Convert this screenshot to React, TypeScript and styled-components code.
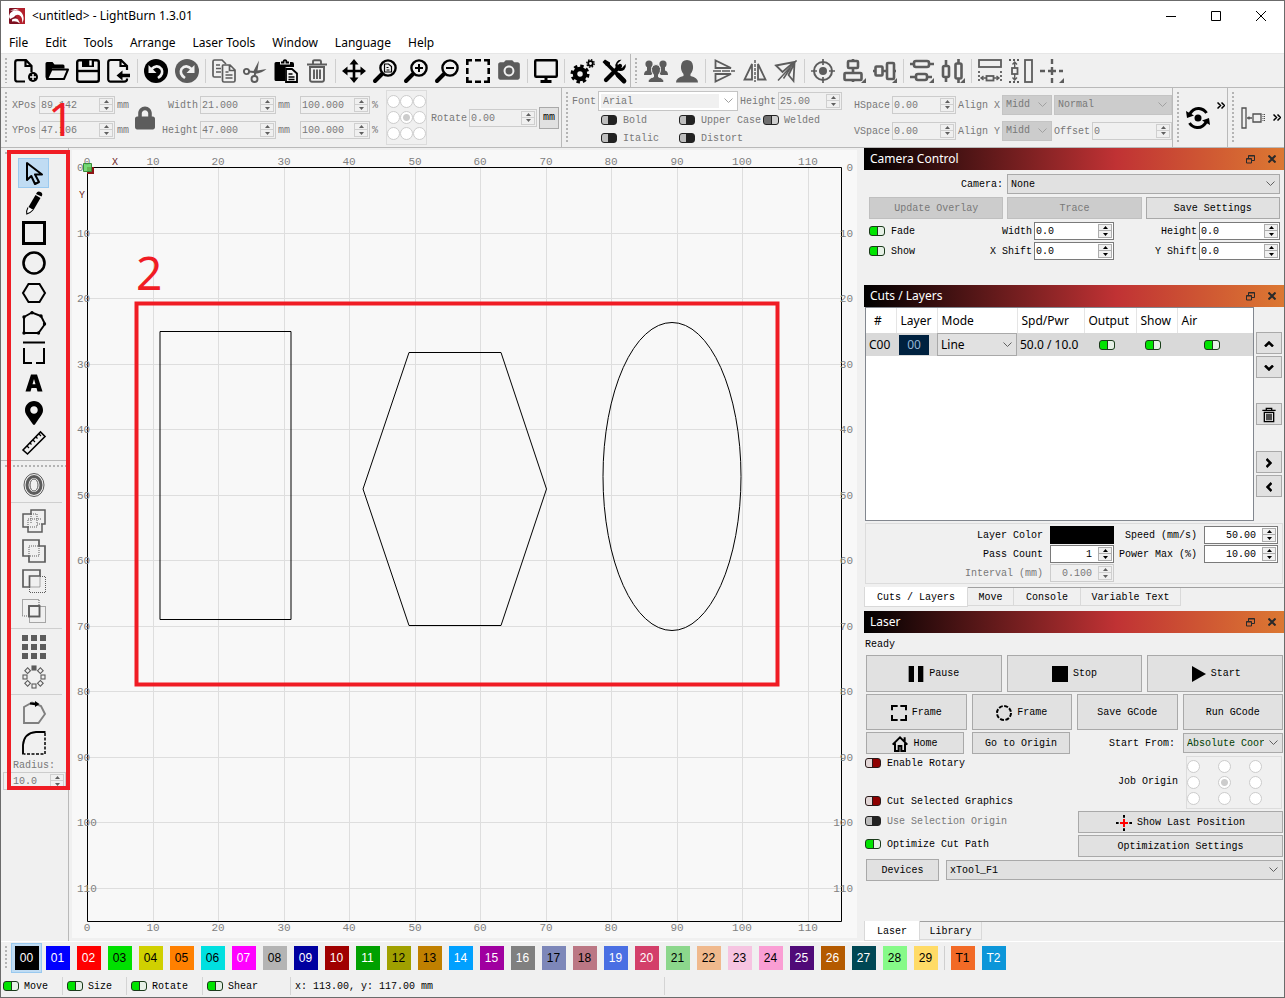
import React from "react";
import styled, { createGlobalStyle, css } from "styled-components";
import { FaLock, FaMapMarkerAlt } from "react-icons/fa";
import { MdCameraAlt } from "react-icons/md";

const mono = `"Liberation Mono", "Noto Sans CJK SC", monospace`;
const ui = `"Noto Sans", "Noto Sans CJK SC", sans-serif`;
const gray = "#5c5c5c";
const line = "#a9a9a9";

const Global = createGlobalStyle`
  *, *::before, *::after { box-sizing: border-box; }
  body { margin: 0; background: #f0f0f0; }
  button, input, select { font: inherit; color: inherit; margin: 0; padding: 0; }
`;

const Window = styled.div`
  min-height: 100vh;
  display: flex;
  flex-direction: column;
  border: 1px solid #6b6b6b;
  background: #f0f0f0;
  font: 10px/12px ${mono};
  color: #000;
  white-space: pre;
`;

/* ---------- shared pieces ---------- */

const Svg = styled.svg<{ $s?: number }>`
  display: block;
  flex: none;
  width: ${(p) => p.$s ?? 24}px;
  height: ${(p) => p.$s ?? 24}px;
  overflow: visible;
`;

const Grip = styled.span<{ $flat?: boolean }>`
  flex: none;
  align-self: stretch;
  ${(p) =>
    p.$flat
      ? css`
          height: 2px;
          margin: 0 0 0 4px;
          background: repeating-linear-gradient(90deg, #b4b4b4 0 2px, transparent 2px 4px);
        `
      : css`
          width: 2px;
          margin: 4px 0 4px 4px;
          background: repeating-linear-gradient(180deg, #b4b4b4 0 2px, transparent 2px 4px);
        `}
`;

const Label = styled.label<{ $dim?: boolean; $right?: boolean }>`
  padding-top: 2px;
  color: ${(p) => (p.$dim ? "#787878" : "#000")};
  text-align: ${(p) => (p.$right ? "right" : "left")};
`;

const Unit = styled.span`
  padding-top: 2px;
`;

const SpinBox = styled.span<{ $dim?: boolean; $right?: boolean }>`
  display: flex;
  height: 18px;
  min-width: 0;
  border: 1px solid ${(p) => (p.$dim ? "#cccccc" : "#7a7a7a")};
  background: ${(p) => (p.$dim ? "#f0f0f0" : "#ffffff")};
  color: ${(p) => (p.$dim ? "#787878" : "#000000")};
  input {
    flex: 1;
    min-width: 0;
    width: 0;
    border: 0;
    outline: 0;
    background: transparent;
    padding: 2px ${(p) => (p.$right ? "5px" : "0")} 0 1px;
    text-align: ${(p) => (p.$right ? "right" : "left")};
  }
`;

const Arrows = styled.span<{ $dim?: boolean }>`
  display: grid;
  grid-template-rows: 1fr 1fr;
  width: 14px;
  margin: 1px;
  button {
    border: 1px solid ${(p) => (p.$dim ? "#cfcfcf" : "#adadad")};
    background: #f0f0f0;
    display: grid;
    place-items: center;
    min-height: 0;
  }
  button + button {
    border-top: 0;
  }
`;

function Spin({ id, value, dim, right, label }: { id?: string; value: string; dim?: boolean; right?: boolean; label?: string }) {
  const c = dim ? "#606060" : "#000";
  return (
    <SpinBox $dim={dim} $right={right}>
      <input id={id} type="text" defaultValue={value} disabled={dim} aria-label={label} />
      <Arrows $dim={dim}>
        <button type="button" aria-label="Increase" disabled={dim}>
          <svg width="5" height="3" viewBox="0 0 5 3"><path d="M2.5 0L5 3H0z" fill={c} /></svg>
        </button>
        <button type="button" aria-label="Decrease" disabled={dim}>
          <svg width="5" height="3" viewBox="0 0 5 3"><path d="M0 0h5L2.5 3z" fill={c} /></svg>
        </button>
      </Arrows>
    </SpinBox>
  );
}

type Tone = "on" | "off" | "dead" | "deadOn";
const fills: Record<Tone, [string, string, string]> = {
  on: ["#00e400", "#e6f0e6", "#1a3a1a"],
  off: ["#e2d6d6", "#8e0000", "#2a1a1a"],
  dead: ["#bdbdbd", "#222222", "#222222"],
  deadOn: ["#6e6e6e", "#cfcfcf", "#222222"],
};

const Toggle = styled.input<{ $tone: Tone }>`
  appearance: none;
  flex: none;
  width: 16px;
  height: 10px;
  border: 1px solid ${(p) => fills[p.$tone][2]};
  border-radius: 3px;
  background: ${(p) => {
    const [a, b, c] = fills[p.$tone];
    const s = p.$tone === "on" || p.$tone === "deadOn" ? 7 : 6;
    return `linear-gradient(90deg, ${a} ${s}px, ${c} ${s}px ${s + 1}px, ${b} ${s + 1}px)`;
  }};
`;

const ToggleLabel = styled.label<{ $dim?: boolean; $gap?: number }>`
  display: flex;
  align-items: center;
  gap: ${(p) => p.$gap ?? 6}px;
  color: ${(p) => (p.$dim ? "#787878" : "#000")};
`;

function Switch({ tone, children, dim, gap, label }: { tone: Tone; children?: React.ReactNode; dim?: boolean; gap?: number; label?: string }) {
  return (
    <ToggleLabel $dim={dim} $gap={gap}>
      <Toggle type="checkbox" $tone={tone} defaultChecked={tone === "on" || tone === "deadOn"} disabled={dim} aria-label={label} />
      {children && <Unit>{children}</Unit>}
    </ToggleLabel>
  );
}

const PickBox = styled.span<{ $look: "white" | "dead" | "live" | "green"; $h?: number }>`
  position: relative;
  display: flex;
  min-width: 0;
  height: ${(p) => p.$h ?? 20}px;
  border: 1px solid ${(p) => (p.$look === "white" || p.$look === "dead" ? "#c4c4c4" : line)};
  background: ${(p) => ({ white: "#fff", dead: "#cccccc", live: "#e1e1e1", green: "#e1e1e1" })[p.$look]};
  color: ${(p) => ({ white: "#787878", dead: "#787878", live: "#000", green: "#004000" })[p.$look]};
  select {
    appearance: none;
    flex: 1;
    min-width: 0;
    border: 0;
    outline: 0;
    opacity: 1;
    background: ${(p) => (p.$look === "white" ? "linear-gradient(#f0f0f0, #f0f0f0) 2px 2px / calc(100% - 20px) calc(100% - 4px) no-repeat" : "transparent")};
    padding: 1px 18px 0 ${(p) => (p.$look === "white" ? 4 : 3)}px;
    color: inherit;
  }
  svg {
    position: absolute;
    right: 4px;
    top: 50%;
    margin-top: -3px;
    pointer-events: none;
  }
`;

function Pick({ id, value, look, h, label }: { id?: string; value: string; look: "white" | "dead" | "live" | "green"; h?: number; label?: string }) {
  const dead = look === "white" || look === "dead";
  return (
    <PickBox $look={look} $h={h}>
      <select id={id} aria-label={label} disabled={dead} defaultValue={value}>
        <option>{value}</option>
      </select>
      <svg width="9" height="6" viewBox="0 0 9 6" fill="none" stroke={dead ? "#a0a0a0" : "#606060"}><path d="M.5 .5l4 4 4-4" /></svg>
    </PickBox>
  );
}

const RadioGrid = styled.div<{ $wide?: boolean }>`
  display: grid;
  grid-template-columns: ${(p) => (p.$wide ? "repeat(3, 31px)" : "repeat(3, 13px)")};
  grid-auto-rows: 16px;
  align-content: center;
  align-items: center;
  width: ${(p) => (p.$wide ? 96 : 41)}px;
  height: ${(p) => (p.$wide ? 53 : 55)}px;
  border: 1px solid #dcdcdc;
  input {
    appearance: none;
    width: 13px;
    height: 13px;
    border: 1px solid #cccccc;
    border-radius: 50%;
    background: #fff;
  }
  input:checked {
    background: radial-gradient(circle, #cccccc 3px, #fff 4px);
  }
`;

function NinePoint({ name, wide }: { name: string; wide?: boolean }) {
  return (
    <RadioGrid $wide={wide} role="radiogroup" aria-label={name}>
      {Array.from({ length: 9 }, (_, i) => (
        <input key={i} type="radio" name={name} defaultChecked={i === 4} disabled aria-label={`${name} ${i + 1}`} />
      ))}
    </RadioGrid>
  );
}

/* ---------- icons ---------- */

const S = ({ children, c = "#000", w = 2, s }: { children: React.ReactNode; c?: string; w?: number; s?: number }) => (
  <Svg $s={s} viewBox="0 0 24 24" fill="none" stroke={c} strokeWidth={w} aria-hidden="true">{children}</Svg>
);

const lens = (
  <>
    <circle cx="15" cy="9" r="7.6" strokeWidth="2.4" />
    <path d="M9 15l-7 7" strokeWidth="4" strokeLinecap="round" />
  </>
);

const icons: Record<string, React.ReactNode> = {
  New: <S w={2.2}><path d="M11 22.5H3.5a2.300 2.300 0 0 1-2.300-2.300V3.500a2.300 2.300 0 0 1 2.300-2.300H12l5.500 5.800v6M11.500 1.500V7H17" /><circle cx="19" cy="18" r="5" fill="#000" stroke="none" /><path d="M19 15v6M16 18h6" stroke="#f0f0f0" strokeWidth="1.500" /></S>,
  Open: <S><path d="M.5 4.500q0-1.500 1.500-1.500h5.500l2 2.500H18q1.500 0 1.500 1.500v2.500H7L2.500 20Q.5 20 .5 18z" fill="#000" stroke="none" /><path d="M6.500 10.500H23l-4 9.500H2z" strokeLinejoin="round" /></S>,
  Save: <S w={2.4}><rect x="1.200" y="1.200" width="21.600" height="21.600" rx="2" /><path d="M6 0h12v8H6z" fill="#000" stroke="none" /><path d="M14.500 1.500v5" stroke="#fff" /><path d="M1 12h22" /></S>,
  Import: <S w={2.2}><path d="M20 11V7l-6-6H3.500a2.300 2.300 0 0 0-2.300 2.300v17a2.300 2.300 0 0 0 2.300 2.300H17q3 0 3-2v-1M13.500 1.500V7H20" /><path d="M9.500 16.500l6-5v3.200H23v3.600h-7.500v3.200z" fill="#000" stroke="none" /></S>,
  Undo: <S><circle cx="12" cy="12" r="12" fill="#000" stroke="none" /><path d="M7 10.500q6-6 10.500-.5 2.500 5-3.500 9" stroke="#f0f0f0" strokeWidth="2.600" /><path d="M4.500 6v8h8z" fill="#f0f0f0" stroke="none" /></S>,
  Redo: <S><circle cx="12" cy="12" r="12" fill={gray} stroke="none" /><path d="M17 10.500q-6-6-10.500-.5-2.500 5 3.500 9" stroke="#f0f0f0" strokeWidth="2.600" /><path d="M19.500 6v8h-8z" fill="#f0f0f0" stroke="none" /></S>,
  Copy: <S c={gray} w={1.7}><path d="M9 18H2.500q-1.500 0-1.500-1.500v-14Q1 1 2.500 1H10l4 4M4 6h4M4 9.500h5M4 13h5" /><path d="M11 6h7l5 5v10.500q0 1.500-1.500 1.500H12q-1.500 0-1.500-1.500V7q0-1 .5-1zM17.500 6v5.500H23M13.500 13h3M13.500 16h7M13.500 19h7" /></S>,
  Cut: <S c={gray} w={1.9}><circle cx="3.500" cy="12.500" r="2.600" /><circle cx="11.500" cy="20" r="3" /><path d="M6 12.500l5 .5M11.500 17l1-4" /><path d="M10 13L16 1.500l-1.500 10 9-1.500q-4 4-12 5z" fill={gray} stroke="none" /></S>,
  Paste: <S><path d="M2 3h4v2.500h10V3h2q2 0 2 2v3h-7q-2 0-2 2v12H2q-1.500 0-1.500-1.500v-16Q.5 3 2 3z" fill="#000" stroke="none" /><path d="M7 3.500h2.500q0-2.300 1.500-2.300t1.500 2.300H15" strokeWidth="1.800" /><path d="M12 10h6l5 4.500V23H12z" fill="#f0f0f0" strokeWidth="1.800" /><path d="M14.500 15h4M14.500 18h6M14.500 20.500h6" strokeWidth="1.300" /></S>,
  Delete: <S c={gray} w={1.9}><path d="M2 5.500h20M8 5V2.500Q8 1.200 9.500 1.200h5Q16 1.200 16 2.500V5M4 8h16M5 8v12.500q0 2.200 2 2.200h10q2 0 2-2.200V8" /><path d="M9 10.500v9.500M12 10.500v9.500M15 10.500v9.500" /></S>,
  Pan: <S w={2.6}><path d="M12 3v18M3 12h18" /><path d="M12 0l4.500 5.500h-9zM12 24l4.500-5.500h-9zM0 12l5.500-4.500v9zM24 12l-5.500-4.500v9z" fill="#000" stroke="none" /></S>,
  "Zoom to page": <S>{lens}<path d="M11.500 5h4l3 2.500V13h-7zM13.500 8.500h2M13.500 11h3" strokeWidth="1.200" /></S>,
  "Zoom in": <S>{lens}<path d="M15 5v8M11 9h8" /></S>,
  "Zoom out": <S>{lens}<path d="M11 9h8" /></S>,
  "Frame selection": <S w={2.6}><path d="M1.300 6V1.300H6M9 1.300h6M18 1.300h4.700V6M22.700 9v6M22.700 18v4.700H18M15 22.700H9M6 22.700H1.300V18M1.300 15V9" /></S>,
  Camera: <Svg as={MdCameraAlt} color={gray} $s={26} />,
  Preview: <S w={2.4}><rect x="1.200" y="1.200" width="21.600" height="16.500" rx="1" /><path d="M12 18v4M6.500 22.500h11" strokeWidth="3" /></S>,
  Settings: <S><circle cx="9" cy="15" r="5" strokeWidth="4.500" /><circle cx="9" cy="15" r="8" strokeWidth="3" strokeDasharray="3.400 2.880" /><circle cx="19.500" cy="4.500" r="2.300" strokeWidth="1.800" /><circle cx="19.500" cy="4.500" r="3.700" strokeWidth="1.400" strokeDasharray="1.500 1.400" /></S>,
  "Device settings": <S><path d="M5 5l14 14" strokeWidth="3.600" /><path d="M4 21L18 7" strokeWidth="4.200" strokeLinecap="round" /><path d="M19.500 .8l-4 3.700.8 3.700 3.700.8 3.700-4q.8 3.500-1.500 5.700-2.600 2.200-5.500 1l-3-3q-1.200-3 1-5.800Q16.500.3 19.500.8zM.5 3L3 .5l5 3v3.300H4z" fill="#000" stroke="none" /><path d="M16 16l6 6" strokeWidth="4.800" strokeLinecap="round" /></S>,
  Group: <S><g fill={gray} stroke="none"><circle cx="5" cy="5" r="3.600" /><circle cx="19" cy="5" r="3.600" /><path d="M0 16q0-4 3-4.500V8h4l3 5-3 3zM24 16q0-4-3-4.500V8h-4l-3 5 3 3z" /><path d="M4 23.500q0-4.500 5.500-5.500v-2Q7 13 7.500 9.500 8 5.500 12 5.500t4.500 4q.5 3.500-2 6.500v2q5.500 1 5.500 5.500z" stroke="#f0f0f0" strokeWidth="1" /></g></S>,
  Ungroup: <S><path d="M1 23.500q0-5 7.500-6.500v-2Q5.500 11.500 6 7q.5-6 6-6t6 6q.5 4.500-2.500 8v2q7.500 1.500 7.500 6.500z" fill={gray} stroke="none" /></S>,
  "Flip vertical": <S c={gray} w={1.8}><path d="M3.500 1.500v7.500H19zM3.500 22.500V15H19z" /><path d="M1 12h22" strokeDasharray="8 1" strokeWidth="1.500" /></S>,
  "Flip horizontal": <S c={gray} w={1.8}><path d="M1.500 20.500H9V5zM22.500 20.500H15V5z" /><path d="M12 1v22" strokeDasharray="3 1" strokeWidth="1.500" /></S>,
  "Mirror across line": <S c={gray} w={1.8}><path d="M2 6.500L20 3 8.500 13zM20.500 4l-1 18-5-6z" /><path d="M4 21.500L22.500 1.500M16.500 9l-7 10.500" strokeWidth="1.500" /></S>,
  "Move to centre": <S c={gray}><circle cx="12" cy="12" r="9" /><circle cx="12" cy="12" r="4" fill={gray} stroke="none" /><path d="M12 0v6M12 18v6M0 12h6M18 12h6" strokeWidth="1.700" /></S>,
  "Align centres vertically": <S c={gray} w={2.6}><rect x="6" y="2" width="10" height="7" rx="1" /><rect x="2.500" y="14" width="17" height="7" rx="1" /><path d="M11 0v2M11 9v5M11 21v2" /><path d="M24 19v5h-5z" fill={gray} stroke="none" /></S>,
  "Align centres horizontally": <S c={gray} w={2.6}><rect x="2.500" y="7.500" width="7" height="9" rx="1" /><rect x="14" y="4" width="7" height="16" rx="1" /><path d="M9 12h5M0 12h2M21 12h2" /><path d="M24 19v5h-5z" fill={gray} stroke="none" /></S>,
  "Distribute vertically": <S c={gray} w={2.6}><rect x="4" y="2" width="15" height="6" rx="2" /><rect x="6" y="15" width="11" height="6" rx="2" /><path d="M0 5h4M19 5h5M0 18h6M17 18h5" /><path d="M24 19v5h-5z" fill={gray} stroke="none" /></S>,
  "Distribute horizontally": <S c={gray} w={2.6}><rect x="2" y="7" width="6" height="11" rx="1.500" /><rect x="14.500" y="4.500" width="6" height="15" rx="1.500" /><path d="M5 1v6M5 18v5M17.500 0v5M17.500 20v4" /><path d="M24 19v5h-5z" fill={gray} stroke="none" /></S>,
  "Same width": <S c={gray} w={1.8}><rect x="1" y="1" width="22" height="7" /><path d="M1 12v12M23 12v12" strokeDasharray="2 2" /><rect x="8.500" y="17" width="7" height="4.500" /><path d="M3 19h5M16 19h5M5.500 17l-2.500 2 2.500 2M18.500 17l2.500 2-2.500 2" strokeWidth="1.400" /></S>,
  "Same height": <S c={gray} w={1.8}><rect x="16" y="1" width="7" height="22" /><path d="M0 1h12M0 23h12" strokeDasharray="2 2" /><rect x="3" y="9" width="5.500" height="6" /><path d="M5.700 3v6M5.700 15v6M3.500 5.500L5.700 3 8 5.500M3.500 18.500l2.200 2.500L8 18.500" strokeWidth="1.400" /></S>,
  "Move to page corner": <S c={gray} w={2.4}><path d="M12 0v5M12 8v8M12 19v5M0 12h5M8 12h8M19 12h4" /><path d="M24 19v5h-5z" fill={gray} stroke="none" /></S>,

  Select: <S w={2}><path d="M5 2v17l4.300-4 3.700 8 4-2-4-7.500h7z" strokeLinejoin="round" /></S>,
  "Draw lines": <S><path d="M6.500 16L13.500 4l5 3-7 12z" fill="#000" stroke="none" /><path d="M14 3q1.500-3.500 4.500-2t1 4.500z" fill="#000" stroke="none" /><path d="M6 16.500Q4 20 4.800 23q3.500-1 6.200-4" fill="#fff" strokeWidth="1.100" /></S>,
  Rectangle: <S w={3}><rect x="1.500" y="1.500" width="21" height="21" /></S>,
  Ellipse: <S w={2.600}><circle cx="12" cy="12" r="10.500" /></S>,
  Polygon: <S w={2}><path d="M6.500 3h11L23 12l-5.500 9h-11L1 12z" /></S>,
  "Edit nodes": <S w={1.9}><path d="M2 22V6l8-4.500L19 5l4 8-6.500 9z" /><g fill="#000" stroke="none"><circle cx="2" cy="6" r="1.700" /><circle cx="10" cy="1.700" r="1.700" /><circle cx="19" cy="5" r="1.700" /><circle cx="22.500" cy="13" r="1.700" /><circle cx="16.500" cy="22" r="1.700" /><circle cx="2" cy="22" r="1.700" /></g></S>,
  Trim: <S w={2}><path d="M1 1.500h22M2 7v15h8M14 22h8V7" /></S>,
  "Create text": <S><path d="M3.500 20.500L9 3.500h6l5.500 17h-5l-1-3.500h-5l-1 3.500zM10.500 13.300h3L12 8z" fill="#000" fillRule="evenodd" stroke="none" /></S>,
  "Position laser": <Svg as={FaMapMarkerAlt} />,
  Measure: <S w={1.600}><path d="M1 19L18.500 1 23 5.500 5.500 23z" /><path d="M5 15l2 2M8 12l1.500 1.500M11 9l2 2M14 6l1.500 1.500M17 3l2 2" strokeWidth="1.200" /></S>,
  Offset: <S c={gray}><ellipse cx="12" cy="12" rx="7" ry="8.500" strokeWidth="3" /><ellipse cx="12" cy="12" rx="10" ry="11.500" strokeWidth="1" /><ellipse cx="12" cy="12" rx="4" ry="6" strokeWidth="1" /></S>,
  Weld: <S c={gray} w={1.500}><path d="M1 5h8V1h14v14h-3v8H6v-5H1z" /><path d="M9 5h6v10h5M9 5v10M6 18V10h14M6 18h9v-3" strokeWidth="1" strokeDasharray="1 1" /></S>,
  "Boolean union": <S c={gray} w={1.700}><path d="M1 1h16v6h6v16H7v-6H1z" /><path d="M7 17V7h10v10z" strokeWidth="1" strokeDasharray="1 1" /></S>,
  "Boolean subtract": <S c={gray} w={1.700}><path d="M1 1h17v6H7.500v11H1z" /><path d="M7.500 18v5.500h16V7.500H18V18H7.500" strokeWidth="1" strokeDasharray="1 1" /></S>,
  "Boolean intersection": <S c={gray} w={1.900}><rect x="7" y="7" width="10.500" height="10.500" /><path d="M7 17H.5V.5H17V7M17.500 7.500h6v16h-16V18" strokeWidth="1" strokeDasharray="1 1" /></S>,
  "Grid array": <S><path d="M0 0h6v6H0zM9 0h6v6H9zM18 0h6v6h-6zM0 9h6v6H0zM9 9h6v6H9zM18 9h6v6h-6zM0 18h6v6H0zM9 18h6v6H9zM18 18h6v6h-6z" fill={gray} stroke="none" /></S>,
  "Circular array": <S c={gray} w={1.100}>{Array.from({ length: 8 }, (_, i) => (<rect key={i} x="10" y="1" width="4" height="4" fill={i ? "none" : gray} transform={`rotate(${i * 45} 12 12)`} />))}</S>,
  "Start point": <S c="#808080" w={1.900}><path d="M2 22V6l8-4.500L19 5l4 8-6.500 9z" /><path d="M8 1.500l5 .2V0l4.500 3-4.500 3V4.300L8 3.500z" fill="#000" stroke="none" /></S>,
  "Radius corner": <S w={1.900}><path d="M1 23.500V14Q2 2 14 1h9.500" /><path d="M23 2v21H2" strokeWidth="1.500" strokeDasharray="3 1.500" /></S>,
};

/* ---------- title and menu ---------- */

const TitleBar = styled.header`
  display: flex;
  align-items: center;
  height: 30px;
  padding: 0 10px 0 8px;
  gap: 7px;
  background: #fff;
  font: 12px/16px ${ui};
  h1 {
    margin: 0;
    flex: 1;
    font: inherit;
  }
`;

const CaptionButton = styled.button`
  width: 45px;
  height: 29px;
  margin-right: -9px;
  border: 0;
  background: none;
  display: grid;
  place-items: center;
  & + & { margin-left: 2px; }
`;

const MenuBar = styled.nav`
  display: flex;
  gap: 17px;
  height: 23px;
  padding: 4px 8px 0;
  background: #fff;
  border-bottom: 1px solid #e6e6e6;
  font: 12px/16px ${ui};
  a {
    color: #000;
    text-decoration: none;
  }
`;

/* ---------- toolbars ---------- */

const Bar = styled.div<{ $h: number }>`
  display: flex;
  height: ${(p) => p.$h}px;
  border-bottom: 1px solid #b9b9b9;
`;

const Section = styled.div<{ $open?: boolean }>`
  display: flex;
  align-items: center;
  border-right: ${(p) => (p.$open ? 0 : "1px solid #b9b9b9")};
`;

const ToolButton = styled.button<{ $tall?: boolean; $active?: boolean }>`
  flex: none;
  display: grid;
  place-items: center;
  width: 31px;
  height: ${(p) => (p.$tall ? 30 : 31)}px;
  border: 1px solid ${(p) => (p.$active ? "#99c9ef" : "transparent")};
  background: ${(p) => (p.$active ? "#c0dcf3" : "none")};
`;

const Divider = styled.span`
  flex: none;
  width: 1px;
  height: 24px;
  margin: 0 2px 0 3px;
  background: #cfcfcf;
`;

const Run = styled.div<{ $pad: number }>`
  display: flex;
  align-items: center;
  padding: 0 ${(p) => p.$pad}px 0 3px;
`;

const Tools = ({ names, pad = 0 }: { names: string[]; pad?: number }) => (
  <Run $pad={pad}>
    {names.map((n, i) => (n === "|" ? <Divider key={i} /> : <ToolButton key={i} type="button" aria-label={n}>{icons[n]}</ToolButton>))}
  </Run>
);

const mainTools = ["New", "Open", "Save", "Import", "|", "Undo", "Redo", "|", "Copy", "Cut", "Paste", "Delete", "|", "Pan", "Zoom to page", "Zoom in", "Zoom out", "Frame selection", "Camera", "|", "Preview", "|", "Settings", "Device settings"];
const arrangeTools = ["Group", "Ungroup", "|", "Flip vertical", "Flip horizontal", "Mirror across line", "|", "Move to centre", "Align centres vertically", "Align centres horizontally", "|", "Distribute vertically", "Distribute horizontally", "|", "Same width", "Same height", "Move to page corner"];

const Fields = styled.div<{ $cols: string; $gap?: number; $h?: number; $ml?: number }>`
  display: grid;
  grid-template-columns: ${(p) => p.$cols};
  grid-auto-rows: ${(p) => p.$h ?? 18}px;
  align-items: center;
  gap: ${(p) => p.$gap ?? 7}px 2px;
  margin-left: ${(p) => p.$ml ?? 0}px;
  color: #787878;
`;

const LockButton = styled.button`
  width: 20px;
  height: 26px;
  margin: 0 7px 0 6px;
  border: 0;
  background: none;
  color: ${gray};
  svg { display: block; width: 20px; height: 24px; }
`;

const UnitButton = styled.button`
  width: 20px;
  height: 22px;
  border: 1px solid ${line};
  background: #e1e1e1;
`;

const RotateRow = styled.div`
  display: grid;
  grid-template-columns: 36px 68px 24px;
  align-items: center;
  gap: 2px;
  margin-left: 4px;
  margin-right: -2px;
`;

const FontBlock = styled.div`
  display: grid;
  grid-template-rows: 20px 18px 18px;
  align-self: start;
  padding: 3px 0 0 4px;
  color: #787878;
`;

const FontRow = styled.div`
  display: grid;
  grid-template-columns: 24px 140px 36px 64px;
  align-items: center;
  gap: 2px;
`;

const StyleRow = styled.div`
  display: grid;
  grid-template-columns: 78px 84px auto;
  align-items: center;
  padding-left: 29px;
`;

const OffsetField = styled.div`
  display: grid;
  grid-template-columns: 36px 1fr;
  gap: 2px;
  align-items: center;
`;

const MoreBar = styled.div<{ $w: number }>`
  display: flex;
  align-items: center;
  justify-content: space-between;
  width: ${(p) => p.$w}px;
  height: 50px;
  padding: 0 2px 0 7px;
`;

const PlainButton = styled.button<{ $up?: boolean }>`
  border: 0;
  background: none;
  display: grid;
  place-items: center;
  align-self: ${(p) => (p.$up ? "flex-start" : "center")};
  padding-top: ${(p) => (p.$up ? 9 : 0)}px;
`;

const More = () => (
  <svg width="8" height="7" viewBox="0 0 8 7" fill="none" stroke="#000" strokeWidth="1.500"><path d="M.5 .5l3 3-3 3M4.500 .5l3 3-3 3" /></svg>
);

/* ---------- work area ---------- */

const Main = styled.main`
  flex: 1;
  display: flex;
  min-height: 793px;
`;

const SideTools = styled.aside`
  position: relative;
  flex: none;
  width: 68px;
  border-right: 1px solid #b9b9b9;
  display: flex;
  flex-direction: column;
  align-items: center;
  padding-top: 4px;
`;

const SideGroup = styled.div<{ $top?: boolean }>`
  align-self: stretch;
  display: flex;
  flex-direction: column;
  align-items: center;
  padding: ${(p) => (p.$top ? "4px 2px 2px 0" : "3px 2px 0 0")};
  ${(p) => p.$top && "border-bottom: 1px solid #b9b9b9; margin-bottom: 4px;"}
`;

const SideRule = styled.span`
  align-self: stretch;
  height: 1px;
  margin: 2px 4px 3px 9px;
  background: #cfcfcf;
`;

const RadiusField = styled.div`
  width: 63px;
  align-self: flex-start;
  margin-left: 2px;
  label { display: block; padding-left: 10px; color: #787878; }
  input { padding-left: 9px; }
`;

const MarkBox = styled.div`
  position: absolute;
  left: 6px;
  right: -2px;
  top: 2px;
  height: 640px;
  border: 4px solid #f01c24;
  pointer-events: none;
`;

const MarkOne = styled.span`
  position: absolute;
  left: 47px;
  top: -60px;
  font: 46px/60px ${ui};
  color: #f01c24;
  pointer-events: none;
`;

const Work = styled.section`
  flex: 1;
  min-width: 0;
  display: flex;
  padding: 2px 7px 3px 3px;
  svg {
    flex: 1;
    min-width: 0;
    background: #f8f8f8;
    font: 11px ${mono};
  }
`;

function Canvas() {
  const ticks = Array.from({ length: 12 }, (_, i) => i);
  const gx = (i: number) => Math.floor(87.5 + i * 65.5);
  const gy = (i: number) => Math.floor(167.5 + i * 65.5);
  return (
    <svg viewBox="72 150 785 788" width="100%" role="img" aria-label="Work area">
      <g stroke="#dedede">
        {ticks.slice(1).map((i) => <path key={i} d={`M${gx(i) + 0.5} 168V921M88 ${gy(i) + 0.5}H841`} />)}
      </g>
      <path d="M87.500 167.500H841.500V921.500H87.500z" fill="none" stroke="#000" />
      <g fill="#808080">
        {ticks.map((i) => (
          <React.Fragment key={i}>
            <text x={gx(i)} y="165" textAnchor="middle">{i * 10}</text>
            <text x={gx(i)} y="931" textAnchor="middle">{i * 10}</text>
            <text x="77" y={gy(i) + 4}>{i * 10}</text>
            <text x="853" y={gy(i) + 4} textAnchor="end">{i * 10}</text>
          </React.Fragment>
        ))}
      </g>
      <g fill="#6b1c1c" fontSize="10">
        <text x="112" y="165">X</text>
        <text x="79" y="198">Y</text>
      </g>
      <path d="M87 167h7v7h-7z" fill="#8c1515" />
      <path d="M83.500 163.500h8v8h-8z" fill="#5fd35f" fillOpacity=".85" stroke="#3a8a3a" />
      <g fill="none" stroke="#000">
        <path d="M160 331.500H291V619.500H160z" />
        <path d="M409 352.500H501L546.500 489 501 625.500H409L363 489z" />
        <ellipse cx="672" cy="476.500" rx="69" ry="154" />
      </g>
      <rect x="136.500" y="303.500" width="641" height="381" fill="none" stroke="#f01c24" strokeWidth="4" />
      <text x="136" y="290" fill="#f01c24" fontSize="46" style={{ fontFamily: "Noto Sans" }}>2</text>
    </svg>
  );
}

/* ---------- docked panels ---------- */

const Dock = styled.aside`
  flex: none;
  width: 420px;
  display: flex;
  flex-direction: column;
`;

const PanelTitle = styled.h2`
  display: flex;
  align-items: center;
  height: 22px;
  margin: 0;
  padding: 0 8px 0 6px;
  gap: 13px;
  background: linear-gradient(90deg, #000 0%, #c03234 60%, #dc7832 100%);
  color: #fff;
  font: 12px/16px ${ui};
  span { flex: 1; }
`;

function Title({ children }: { children: string }) {
  return (
    <PanelTitle>
      <span>{children}</span>
      <PlainButton type="button" aria-label="Float">
        <svg width="9" height="9" viewBox="0 0 9 9" fill="none" stroke="#2a2a2a"><path d="M.5 3.500h5v4.500h-5zM.5 4h5M2.500 3V.5h6v5H6M2.500 1h6" /></svg>
      </PlainButton>
      <PlainButton type="button" aria-label="Close">
        <svg width="8" height="8" viewBox="0 0 8 8" stroke="#2a2a2a" strokeWidth="2"><path d="M.5 .5l7 7M7.500 .5l-7 7" /></svg>
      </PlainButton>
    </PanelTitle>
  );
}

const Push = styled.button<{ $h?: number; $dead?: boolean }>`
  display: flex;
  align-items: center;
  justify-content: center;
  gap: 5px;
  min-width: 0;
  height: ${(p) => p.$h ?? 22}px;
  padding-top: 1px;
  border: 1px solid ${(p) => (p.$dead ? "#bfbfbf" : line)};
  background: ${(p) => (p.$dead ? "#cccccc" : "#e1e1e1")};
  color: ${(p) => (p.$dead ? "#787878" : "#000")};
`;

const CameraBody = styled.div`
  display: grid;
  gap: 2px;
  height: 115px;
  align-content: start;
  padding: 4px 4px 0 5px;
`;

const CameraPick = styled.div`
  display: grid;
  grid-template-columns: 134px 1fr;
  gap: 4px;
  align-items: center;
`;

const CameraButtons = styled.div`
  display: grid;
  grid-template-columns: repeat(3, 1fr);
  gap: 4px;
  padding: 1px 0;
`;

const CameraRow = styled.div`
  display: grid;
  grid-template-columns: 1fr 42px 80px 81px 81px;
  gap: 2px;
  align-items: center;
`;

const LayersBody = styled.div`
  display: grid;
  grid-template-columns: 389px 1fr;
  gap: 2px;
  padding: 0 2px 0 1px;
  height: 214px;
`;

const TableFrame = styled.div`
  border: 1px solid #82878f;
  background: #fff;
`;

const LayerTable = styled.table`
  width: 100%;
  border-collapse: collapse;
  table-layout: fixed;
  font: 12px/16px ${ui};
  th {
    height: 25px;
    padding: 0 0 0 4px;
    text-align: left;
    font-weight: 400;
    border-right: 1px solid #e5e5e5;
  }
  th:last-child { border-right: 0; }
  th:first-child { padding-left: 8px; }
  td {
    height: 23px;
    padding: 0 0 0 3px;
    background: #d9d9d9;
  }
  td:nth-child(3) { padding-left: 0; }
  td label { justify-content: center; padding-right: 10px; }
  td:last-child label { justify-content: flex-start; padding-left: 24px; }
`;

const LayerChip = styled.span`
  display: block;
  width: 30px;
  background: #00213f;
  color: #93b4d4;
  line-height: 20px;
  text-align: center;
`;

const SideButtons = styled.div`
  display: grid;
  grid-template-rows: 22px 22px 22px 22px 22px;
  row-gap: 2px;
  padding-top: 25px;
  & > :nth-child(3) { margin-top: 23px; margin-bottom: -23px; }
  & > :nth-child(n + 4) { margin-top: 47px; margin-bottom: -47px; }
`;

const LayerProps = styled.div`
  display: grid;
  grid-template-columns: 177px 64px 76px 74px;
  grid-auto-rows: 18px;
  gap: 1px 7px;
  align-items: center;
  margin: 2px 1px 0;
  padding: 2px 0;
  border: 1px solid #dcdcdc;
  height: 61px;
  & > :nth-child(4n + 3) { margin-left: -7px; }
`;

const Swatch = styled.button`
  height: 18px;
  border: 0;
  background: #000;
`;

const Tabs = styled.div<{ $mt: number }>`
  display: flex;
  flex: none;
  align-items: flex-start;
  height: 20px;
  margin-top: ${(p) => p.$mt}px;
  border-top: 1px solid #a0a0a0;
`;

const Tab = styled.button<{ $w: number; $on?: boolean }>`
  width: ${(p) => p.$w}px;
  height: ${(p) => (p.$on ? 20 : 18)}px;
  margin-top: ${(p) => (p.$on ? -1 : 0)}px;
  padding-top: 2px;
  border: 1px solid #d9d9d9;
  border-width: 0 1px 1px ${(p) => (p.$on ? 1 : 0)}px;
  background: ${(p) => (p.$on ? "#fff" : "#f0f0f0")};
`;

const LaserDock = styled.section`
  flex: 1;
  display: flex;
  flex-direction: column;
  margin-top: 4px;
`;

const LaserBody = styled.div`
  flex: 1;
  display: flex;
  flex-direction: column;
  padding: 6px 1px 0;
`;

const Row = styled.div<{ $cols: string; $gap?: number; $mt?: number }>`
  display: grid;
  grid-template-columns: ${(p) => p.$cols};
  column-gap: ${(p) => p.$gap ?? 5}px;
  align-items: center;
  margin-top: ${(p) => p.$mt ?? 3}px;
  padding-left: 1px;
`;

const JobGrid = styled.div`
  display: grid;
  grid-template-columns: 213px 1fr;
  margin-top: 1px;
`;

const Options = styled.div`
  display: flex;
  flex-direction: column;
  & > label { height: 20px; margin-bottom: 3px; }
  & > label:first-child { height: 16px; margin-bottom: 20px; }
  & > label:nth-child(2) { margin-bottom: 0; }
`;

const JobSide = styled.div`
  display: grid;
  gap: 2px;
`;

const JobOrigin = styled.div`
  display: flex;
  align-items: center;
  justify-content: flex-end;
  gap: 8px;
  padding-right: 1px;
  height: 54px;
`;

/* ---------- palette and status ---------- */

const Palette = styled.div`
  display: flex;
  align-items: center;
  height: 33px;
  border-top: 1px solid #fff;
  font: 12px/16px "Liberation Sans", sans-serif;
`;

const ColorSlot = styled.button<{ $on?: boolean }>`
  flex: none;
  display: grid;
  place-items: center;
  width: 31px;
  height: 30px;
  border: 1px solid ${(p) => (p.$on ? "#99c9ef" : "transparent")};
  background: ${(p) => (p.$on ? "#c0dcf3" : "none")};
`;

const ColorChip = styled.span<{ $bg: string; $fg: string }>`
  display: block;
  width: 24px;
  background: ${(p) => p.$bg};
  color: ${(p) => p.$fg};
  line-height: 24px;
`;

const SlotRun = styled.div`
  display: flex;
  align-items: center;
  margin-left: 4px;
`;

const colors: [string, string][] = [
  ["#000000", "#fff"], ["#0000ff", "#fff"], ["#ff0000", "#fff"], ["#00e000", "#000"], ["#d0d000", "#000"], ["#ff8000", "#000"],
  ["#00e0e0", "#000"], ["#ff00ff", "#fff"], ["#b4b4b4", "#000"], ["#0000a0", "#fff"], ["#a00000", "#fff"], ["#00a000", "#fff"],
  ["#a0a000", "#000"], ["#c08000", "#000"], ["#00a0ff", "#fff"], ["#a000a0", "#fff"], ["#808080", "#fff"], ["#7d87b9", "#000"],
  ["#bb7784", "#000"], ["#4a6fe3", "#fff"], ["#d33f6a", "#fff"], ["#8cd78c", "#000"], ["#f0b98d", "#000"], ["#f6c4e1", "#000"],
  ["#fa9ed4", "#000"], ["#500a78", "#fff"], ["#b45a00", "#fff"], ["#004754", "#fff"], ["#86fa88", "#000"], ["#ffdb66", "#000"],
];

const Status = styled.footer`
  display: flex;
  align-items: center;
  height: 23px;
  padding-left: 2px;
`;

const StatusCell = styled.div<{ $w: number }>`
  display: flex;
  align-items: center;
  width: ${(p) => p.$w}px;
  height: 18px;
  margin-right: 4px;
  border-right: 1px solid #d4d4d4;
`;

export default function App() {
  return (
    <Window>
      <Global />
      <TitleBar>
        <svg width="16" height="16" viewBox="0 0 16 16" aria-hidden="true">
          <rect width="16" height="16" rx="1" fill="#7d1020" />
          <path d="M8 0h8v16h-5L5 5z" fill="#b3202c" />
          <path d="M0 9q0-4 4-6 5-2 8 1 3 3 2.500 8l-1.500 3q1-6-3-8-3-1-5 2L1 11zM3 11.500q4-2 6 0l2 4q-4-3-8-2zM1 2.500l5-1.500h4L5 2.500z" fill="#fff" />
        </svg>
        <h1>&lt;untitled&gt; - LightBurn 1.3.01</h1>
        <CaptionButton type="button" aria-label="Minimize"><svg width="10" height="10" stroke="#000"><path d="M0 5.500h10" /></svg></CaptionButton>
        <CaptionButton type="button" aria-label="Maximize"><svg width="10" height="10" stroke="#000" fill="none"><path d="M.5 .5h9v9h-9z" /></svg></CaptionButton>
        <CaptionButton type="button" aria-label="Close window"><svg width="10" height="10" stroke="#000"><path d="M0 0l10 10M10 0L0 10" /></svg></CaptionButton>
      </TitleBar>
      <MenuBar>
        {["File", "Edit", "Tools", "Arrange", "Laser Tools", "Window", "Language", "Help"].map((m) => <a key={m} href="#">{m}</a>)}
      </MenuBar>

      <Bar $h={34}>
        <Section><Grip /><Tools names={mainTools} pad={1} /></Section>
        <Section $open><Grip /><Tools names={arrangeTools} /></Section>
      </Bar>

      <Bar $h={60}>
        <Section>
          <Grip />
          <Fields $cols="25px 76px 12px" $ml={5}>
            <Label $dim htmlFor="xpos">XPos</Label><Spin id="xpos" value="89.142" dim /><Unit>mm</Unit>
            <Label $dim htmlFor="ypos">YPos</Label><Spin id="ypos" value="47.106" dim /><Unit>mm</Unit>
          </Fields>
          <LockButton type="button" aria-label="Lock aspect ratio"><FaLock /></LockButton>
          <Fields $cols="36px 76px 20px 70px 8px">
            <Label $dim $right htmlFor="width">Width</Label><Spin id="width" value="21.000" dim /><Unit>mm</Unit><Spin label="Width scale" value="100.000" dim /><Unit>%</Unit>
            <Label $dim $right htmlFor="height">Height</Label><Spin id="height" value="47.000" dim /><Unit>mm</Unit><Spin label="Height scale" value="100.000" dim /><Unit>%</Unit>
          </Fields>
          <Fields $cols="41px" $h={55} $ml={6}><NinePoint name="Anchor" /></Fields>
          <RotateRow>
            <Label $dim htmlFor="rotate">Rotate</Label><Spin id="rotate" value="0.00" dim /><UnitButton type="button">mm</UnitButton>
          </RotateRow>
        </Section>
        <Section>
          <Grip />
          <FontBlock>
            <FontRow>
              <Label $dim htmlFor="font">Font</Label><Pick id="font" value="Arial" look="white" />
              <Label $dim htmlFor="fheight">Height</Label><Spin id="fheight" value="25.00" dim />
            </FontRow>
            <StyleRow>
              <Switch tone="dead" dim>Bold</Switch><Switch tone="dead" dim>Upper Case</Switch><Switch tone="deadOn" dim gap={5}>Welded</Switch>
            </StyleRow>
            <StyleRow>
              <Switch tone="dead" dim>Italic</Switch><Switch tone="dead" dim>Distort</Switch>
            </StyleRow>
          </FontBlock>
          <Fields $cols="36px 64px 42px 50px 118px" $h={20} $gap={6} $ml={12}>
            <Label $dim htmlFor="hspace">HSpace</Label><Spin id="hspace" value="0.00" dim />
            <Label $dim htmlFor="alignx">Align X</Label><Pick id="alignx" value="Midd" look="dead" /><Pick label="Text mode" value="Normal" look="dead" />
            <Label $dim htmlFor="vspace">VSpace</Label><Spin id="vspace" value="0.00" dim />
            <Label $dim htmlFor="aligny">Align Y</Label><Pick id="aligny" value="Midd" look="dead" />
            <OffsetField><Label $dim htmlFor="offset">Offset</Label><Spin id="offset" value="0" dim /></OffsetField>
          </Fields>
        </Section>
        <Section>
          <Grip />
          <MoreBar $w={48}>
            <PlainButton type="button" aria-label="Rotary setup">
              <S w={3}><path d="M3.500 8.500Q7 2 13 2.500q5 .5 7.500 4.500M20.500 15.500Q17 22 11 21.500q-5-.5-7.500-4.500" /><circle cx="12" cy="12" r="3.500" fill="#000" stroke="none" /><path d="M0 5l1 7 7-2.500zM24 19l-1-7-7 2.500z" fill="#000" stroke="none" /></S>
            </PlainButton>
            <PlainButton type="button" $up aria-label="More rotary tools"><More /></PlainButton>
          </MoreBar>
        </Section>
        <Section $open>
          <Grip />
          <MoreBar $w={49}>
            <PlainButton type="button" aria-label="Dock left">
              <S c="#505050" w={1.300}><path d="M1 2h4v20H1zM12 8h8v8h-8zM6 12h5M8 10.500v3" /><path d="M22 8v8M23.500 8v8" strokeDasharray="1 1" strokeWidth="1" /></S>
            </PlainButton>
            <PlainButton type="button" aria-label="More docking tools"><More /></PlainButton>
          </MoreBar>
        </Section>
      </Bar>

      <Main>
        <SideTools>
          <Grip $flat />
          <SideGroup $top>
            {["Select", "Draw lines", "Rectangle", "Ellipse", "Polygon", "Edit nodes", "Trim", "Create text", "Position laser", "Measure"].map((n) => (
              <ToolButton key={n} type="button" $tall $active={n === "Select"} aria-label={n}>{icons[n]}</ToolButton>
            ))}
          </SideGroup>
          <Grip $flat />
          <SideGroup>
            {["Offset", "|", "Weld", "Boolean union", "Boolean subtract", "Boolean intersection", "|", "Grid array", "Circular array", "|", "Start point", "Radius corner"].map((n, i) =>
              n === "|" ? <SideRule key={i} /> : <ToolButton key={i} type="button" $tall aria-label={n}>{icons[n]}</ToolButton>
            )}
          </SideGroup>
          <RadiusField>
            <Label $dim htmlFor="radius">Radius:</Label>
            <Spin id="radius" value="10.0" dim />
          </RadiusField>
          <MarkBox />
          <MarkOne>1</MarkOne>
        </SideTools>

        <Work><Canvas /></Work>

        <Dock>
          <Title>Camera Control</Title>
          <CameraBody>
            <CameraPick><Label $right htmlFor="camera">Camera:</Label><Pick id="camera" value="None" look="live" /></CameraPick>
            <CameraButtons>
              <Push type="button" $dead disabled>Update Overlay</Push><Push type="button" $dead disabled>Trace</Push><Push type="button">Save Settings</Push>
            </CameraButtons>
            <CameraRow>
              <Switch tone="on">Fade</Switch>
              <Label $right htmlFor="cwidth">Width</Label><Spin id="cwidth" value="0.0" />
              <Label $right htmlFor="cheight">Height</Label><Spin id="cheight" value="0.0" />
            </CameraRow>
            <CameraRow>
              <Switch tone="on">Show</Switch>
              <Label $right htmlFor="xshift">X Shift</Label><Spin id="xshift" value="0.0" />
              <Label $right htmlFor="yshift">Y Shift</Label><Spin id="yshift" value="0.0" />
            </CameraRow>
          </CameraBody>

          <Title>Cuts / Layers</Title>
          <LayersBody>
            <TableFrame>
              <LayerTable>
                <colgroup>
                  <col width="30" /><col width="41" /><col width="80" /><col width="67" /><col width="52" /><col width="41" /><col />
                </colgroup>
                <thead>
                  <tr>{["#", "Layer", "Mode", "Spd/Pwr", "Output", "Show", "Air"].map((h) => <th key={h}>{h}</th>)}</tr>
                </thead>
                <tbody>
                  <tr>
                    <td>C00</td>
                    <td><LayerChip>00</LayerChip></td>
                    <td><Pick label="Mode" value="Line" look="live" h={23} /></td>
                    <td>50.0 / 10.0</td>
                    <td><Switch tone="on" label="Output" /></td>
                    <td><Switch tone="on" label="Show" /></td>
                    <td><Switch tone="on" label="Air" /></td>
                  </tr>
                </tbody>
              </LayerTable>
            </TableFrame>
            <SideButtons>
              <Push type="button" aria-label="Move layer up"><svg width="10" height="6" fill="none" stroke="#000" strokeWidth="2.500"><path d="M1 5.500l4-4 4 4" /></svg></Push>
              <Push type="button" aria-label="Move layer down"><svg width="10" height="6" fill="none" stroke="#000" strokeWidth="2.500"><path d="M1 .5l4 4 4-4" /></svg></Push>
              <Push type="button" aria-label="Delete layer"><S s={16} w={2}><path d="M2 5h20M8 5V2h8v3M4 8h16M5 8v14h14V8M9 10v10M12 10v10M15 10v10" /></S></Push>
              <Push type="button" aria-label="Next"><svg width="6" height="10" fill="none" stroke="#000" strokeWidth="2.500"><path d="M.5 1l4 4-4 4" /></svg></Push>
              <Push type="button" aria-label="Previous"><svg width="6" height="10" fill="none" stroke="#000" strokeWidth="2.500"><path d="M5.500 1l-4 4 4 4" /></svg></Push>
            </SideButtons>
          </LayersBody>
          <LayerProps>
            <Label $right htmlFor="lcolor">Layer Color</Label><Swatch id="lcolor" type="button" aria-label="Layer Color" />
            <Label $right htmlFor="speed">Speed (mm/s)</Label><Spin id="speed" value="50.00" right />
            <Label $right htmlFor="pass">Pass Count</Label><Spin id="pass" value="1" right />
            <Label $right htmlFor="power">Power Max (%)</Label><Spin id="power" value="10.00" right />
            <Label $right $dim htmlFor="interval">Interval (mm)</Label><Spin id="interval" value="0.100" right dim />
          </LayerProps>
          <Tabs $mt={3}>
            <Tab type="button" $w={104} $on>Cuts / Layers</Tab><Tab type="button" $w={46}>Move</Tab><Tab type="button" $w={67}>Console</Tab><Tab type="button" $w={100}>Variable Text</Tab>
          </Tabs>

          <LaserDock>
            <Title>Laser</Title>
            <LaserBody>
              <span>Ready</span>
              <Row $cols="repeat(3, 1fr)" $mt={4}>
                <Push type="button" $h={37}><S s={16}><path d="M1 0h8v24H1zM15 0h8v24h-8z" fill="#000" stroke="none" /></S>Pause</Push>
                <Push type="button" $h={37}><S s={16}><path d="M0 0h24v24H0z" fill="#000" stroke="none" /></S>Stop</Push>
                <Push type="button" $h={37}><S s={16}><path d="M3 0l21 12L3 24z" fill="#000" stroke="none" /></S>Start</Push>
              </Row>
              <Row $cols="repeat(4, 1fr)" $mt={2}>
                <Push type="button" $h={36}><S s={16} w={3}><path d="M1.500 8V1.500H10M14 1.500h8.500V8M22.500 15v7.500H14M10 22.500H1.500V15" /></S>Frame</Push>
                <Push type="button" $h={36}><S s={16} w={3}><circle cx="12" cy="12" r="10.500" strokeDasharray="6 2.240" /></S>Frame</Push>
                <Push type="button" $h={36}>Save GCode</Push>
                <Push type="button" $h={36}>Run GCode</Push>
              </Row>
              <Row $cols="98px 98px 1fr 100px" $gap={8} $mt={2}>
                <Push type="button"><S s={16} w={3}><path d="M1 13L12 2l11 11M4.500 11v11.500H10V15h4v7.500h5.500V11M19 2v6" /></S>Home</Push>
                <Push type="button">Go to Origin</Push>
                <Label $right htmlFor="startfrom">Start From:</Label>
                <Pick id="startfrom" value="Absolute Coor" look="green" />
              </Row>
              <JobGrid>
                <Options>
                  <Switch tone="off">Enable Rotary</Switch>
                  <Switch tone="off">Cut Selected Graphics</Switch>
                  <Switch tone="dead" dim>Use Selection Origin</Switch>
                  <Switch tone="on">Optimize Cut Path</Switch>
                </Options>
                <JobSide>
                  <JobOrigin>Job Origin<NinePoint name="Job Origin" wide /></JobOrigin>
                  <Push type="button"><S s={16} w={3}><path d="M12 0v4M12 20v4M0 12h4M20 12h4" /><path d="M12 6v12M6 12h12" stroke="#ff0000" /></S>Show Last Position</Push>
                  <Push type="button">Optimization Settings</Push>
                </JobSide>
              </JobGrid>
              <Row $cols="73px 1fr" $gap={7} $mt={2}>
                <Push type="button">Devices</Push>
                <Pick label="Device" value="xTool_F1" look="live" />
              </Row>
            </LaserBody>
            <Tabs $mt={0}>
              <Tab type="button" $w={56} $on>Laser</Tab><Tab type="button" $w={62}>Library</Tab>
            </Tabs>
          </LaserDock>
        </Dock>
      </Main>

      <Palette>
        <Grip />
        <SlotRun>
          {colors.map(([bg, fg], i) => (
            <ColorSlot key={i} type="button" $on={i === 0}><ColorChip $bg={bg} $fg={fg}>{String(i).padStart(2, "0")}</ColorChip></ColorSlot>
          ))}
          <Divider />
          <ColorSlot type="button"><ColorChip $bg="#f26a26" $fg="#000">T1</ColorChip></ColorSlot>
          <ColorSlot type="button"><ColorChip $bg="#0c96d9" $fg="#fff">T2</ColorChip></ColorSlot>
        </SlotRun>
      </Palette>
      <Status>
        <StatusCell $w={60}><Switch tone="on" gap={5}>Move</Switch></StatusCell>
        <StatusCell $w={60}><Switch tone="on" gap={5}>Size</Switch></StatusCell>
        <StatusCell $w={72}><Switch tone="on" gap={5}>Rotate</Switch></StatusCell>
        <StatusCell $w={84}><Switch tone="on" gap={5}>Shear</Switch></StatusCell>
        <StatusCell $w={370}><Unit>x: 113.00, y: 117.00 mm</Unit></StatusCell>
      </Status>
    </Window>
  );
}
